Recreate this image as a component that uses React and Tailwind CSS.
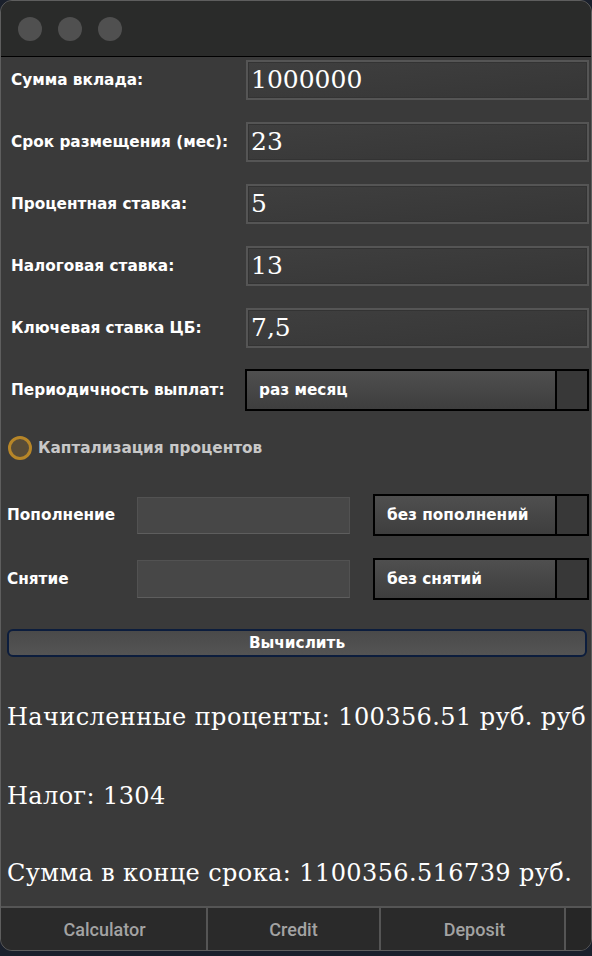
import React from "react";

const serif = { fontFamily: '"DejaVu Serif", "Liberation Serif", serif' };
const sans = { fontFamily: '"DejaVu Sans", sans-serif' };

function Field({ label, value }) {
  return (
    <div className="flex items-center h-[40px]">
      <div className="w-[245px] pl-[10px] text-white text-[15.3px] font-bold whitespace-nowrap" style={sans}>
        {label}
      </div>
      <div className="w-[343px] h-[40px] border-2 border-[#555555] bg-gradient-to-br from-[#3f3f3f] to-[#363636] flex items-center pl-[3px] text-white text-[25px] shadow-[inset_0_0_0_1px_#333]" style={serif}>
        {value}
      </div>
    </div>
  );
}

function Combo({ text, className }) {
  return (
    <div className={"flex h-[42px] border-2 border-black " + className}>
      <div className="flex-1 bg-gradient-to-b from-[#4f4f4f] to-[#3e3e3e] flex items-center pl-[12px] text-white text-[15.3px] font-bold" style={sans}>
        {text}
      </div>
      <div className="w-[32px] border-l-2 border-black bg-[#383838]" />
    </div>
  );
}

export default function App() {
  return (
    <div className="w-[592px] h-[956px] bg-[#1a202c] relative overflow-hidden">
      <div className="w-[592px] h-[951px] rounded-[12px] border border-[#5e5e5e] bg-[#3a3a3a] overflow-hidden flex flex-col">
        <div className="h-[56px] shrink-0 bg-[#2a2b2a] border-b border-black flex items-center pl-[17px] gap-[16px]">
          <div className="w-[24px] h-[24px] rounded-full bg-[#505050]" />
          <div className="w-[24px] h-[24px] rounded-full bg-[#505050]" />
          <div className="w-[24px] h-[24px] rounded-full bg-[#505050]" />
        </div>
        <div className="flex-1 flex flex-col">
          <div className="mt-[3px] flex flex-col gap-[22px]">
            <Field label="Сумма вклада:" value="1000000" />
            <Field label="Срок размещения (мес):" value="23" />
            <Field label="Процентная ставка:" value="5" />
            <Field label="Налоговая ставка:" value="13" />
            <Field label="Ключевая ставка ЦБ:" value="7,5" />
          </div>
          <div className="mt-[21px] flex items-center">
            <div className="w-[244px] pl-[10px] text-white text-[15.3px] font-bold whitespace-nowrap" style={sans}>
              Периодичность выплат:
            </div>
            <Combo text="раз месяц" className="w-[344px]" />
          </div>
          <div className="mt-[25px] flex items-center pl-[7px] h-[24px]">
            <div className="w-[24px] h-[24px] rounded-full border-[3px] border-[#b78628] bg-[#584c38]" />
            <div className="ml-[6px] text-[#c8c8c8] text-[15.3px] font-bold" style={sans}>
              Каптализация процентов
            </div>
          </div>
          <div className="mt-[34px] flex items-center">
            <div className="w-[136px] pl-[6px] text-white text-[15.3px] font-bold" style={sans}>
              Пополнение
            </div>
            <div className="w-[213px] h-[37px] bg-[#474747] border border-[#525252] border-b-[#5e5e5e]" />
            <Combo text="без пополнений" className="ml-[23px] w-[216px]" />
          </div>
          <div className="mt-[22px] flex items-center">
            <div className="w-[136px] pl-[6px] text-white text-[15.3px] font-bold" style={sans}>
              Снятие
            </div>
            <div className="w-[213px] h-[38px] bg-[#474747] border border-[#525252] border-b-[#5e5e5e]" />
            <Combo text="без снятий" className="ml-[23px] w-[216px]" />
          </div>
          <div className="mt-[29px] ml-[6px] mr-[4px] h-[28px] rounded-[6px] border-2 border-[#0c1d3d] bg-gradient-to-b from-[#4a4a4a] to-[#545454] flex items-center justify-center text-white text-[15.3px] font-bold" style={sans}>
            Вычислить
          </div>
          <div className="pl-[6px] text-white text-[24px] whitespace-nowrap" style={{ ...serif, letterSpacing: "0.4px" }}>
            <div className="mt-[45px] leading-[30px]">Начисленные проценты: 100356.51 руб. руб</div>
            <div className="mt-[49px] leading-[30px]">Налог: 1304</div>
            <div className="mt-[47px] leading-[30px]">Сумма в конце срока: 1100356.516739 руб.</div>
          </div>
        </div>
        <div className="h-[44px] shrink-0 border-t-2 border-[#555555] bg-[#2a2a2a] flex text-[#a3a3a3] text-[18px] font-medium" style={{ fontFamily: "Roboto, sans-serif" }}>
          <div className="w-[207px] flex items-center justify-center border-r-2 border-[#555555] pl-[2px]">Calculator</div>
          <div className="w-[173px] flex items-center justify-center border-r-2 border-[#555555]">Credit</div>
          <div className="w-[185px] flex items-center justify-center border-r-2 border-[#555555] pl-[4px]">Deposit</div>
          <div className="flex-1 bg-[#262626]" />
        </div>
      </div>
    </div>
  );
}
